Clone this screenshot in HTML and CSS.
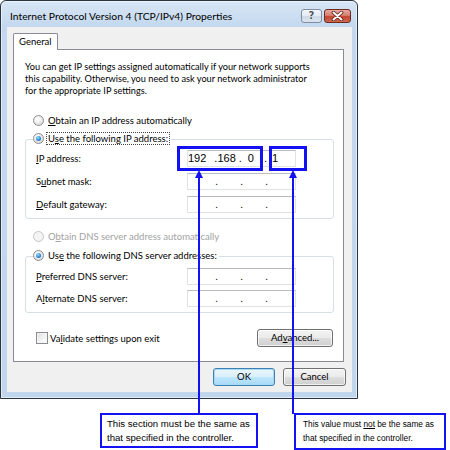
FILE: index.html
```html
<!DOCTYPE html>
<html>
<head>
<meta charset="utf-8">
<title>Internet Protocol Version 4 (TCP/IPv4) Properties</title>
<link rel="stylesheet" href="styles.css">
</head>
<body>
<div class="page">
  <div class="window">
    <div class="titlebar">
      <span class="title">Internet Protocol Version 4 (TCP/IPv4) Properties</span>
      <div class="caption-btns">
        <span class="cbtn help">?</span>
        <span class="cbtn close">
          <svg width="13" height="10" viewBox="0 0 13 10"><path d="M2.5 1.5 L10.5 8.5 M10.5 1.5 L2.5 8.5" stroke="#5a1f18" stroke-width="3.6" stroke-linecap="round"/><path d="M2.5 1.5 L10.5 8.5 M10.5 1.5 L2.5 8.5" stroke="#ffffff" stroke-width="2" stroke-linecap="round"/></svg>
        </span>
      </div>
    </div>
    <div class="client">
      <div class="tabs"><span class="tab">General</span></div>
      <div class="panel">
        <p class="intro">You can get IP settings assigned automatically if your network supports<br>this capability. Otherwise, you need to ask your network administrator<br>for the appropriate IP settings.</p>
        <div class="opt first"><span class="radio"></span><span><u>O</u>btain an IP address automatically</span></div>
        <div class="group g-ip">
          <div class="legend"><span class="radio on"></span><span class="focus">U<u>s</u>e the following IP address:</span></div>
          <div class="row first"><span class="lbl"><u>I</u>P address:</span>
            <div class="ipfield filled"><span class="n">192</span><span class="p p1">.</span><span class="n">168</span><span class="p p2">.</span><span class="n n3">0</span><span class="p p3">.</span><span class="n n4">1</span></div>
          </div>
          <div class="row"><span class="lbl">S<u>u</u>bnet mask:</span>
            <div class="ipfield"><span class="seg"></span><span class="sep">.</span><span class="seg"></span><span class="sep">.</span><span class="seg"></span><span class="sep">.</span><span class="seg"></span></div>
          </div>
          <div class="row"><span class="lbl"><u>D</u>efault gateway:</span>
            <div class="ipfield"><span class="seg"></span><span class="sep">.</span><span class="seg"></span><span class="sep">.</span><span class="seg"></span><span class="sep">.</span><span class="seg"></span></div>
          </div>
        </div>
        <div class="opt dns-auto disabled"><span class="radio"></span><span>O<u>b</u>tain DNS server address automatically</span></div>
        <div class="group g-dns">
          <div class="legend"><span class="radio on"></span><span class="plain">Us<u>e</u> the following DNS server addresses:</span></div>
          <div class="row first"><span class="lbl"><u>P</u>referred DNS server:</span>
            <div class="ipfield"><span class="seg"></span><span class="sep">.</span><span class="seg"></span><span class="sep">.</span><span class="seg"></span><span class="sep">.</span><span class="seg"></span></div>
          </div>
          <div class="row"><span class="lbl">A<u>l</u>ternate DNS server:</span>
            <div class="ipfield"><span class="seg"></span><span class="sep">.</span><span class="seg"></span><span class="sep">.</span><span class="seg"></span><span class="sep">.</span><span class="seg"></span></div>
          </div>
        </div>
        <div class="bottom-row">
          <div class="check-row"><span class="checkbox"></span><span>Va<u>l</u>idate settings upon exit</span></div>
          <button class="btn advanced">Ad<u>v</u>anced...</button>
        </div>
      </div>
      <div class="actions">
        <button class="btn ok">OK</button>
        <button class="btn cancel">Cancel</button>
      </div>
    </div>
  </div>

  <svg class="annot" width="450" height="450" viewBox="0 0 450 450">
    <rect x="178.5" y="147.5" width="83" height="22" fill="none" stroke="#1212f2" stroke-width="3"/>
    <rect x="270.5" y="147.5" width="35" height="22" fill="none" stroke="#1212f2" stroke-width="3"/>
    <line x1="199" y1="176" x2="199" y2="414" stroke="#1212f2" stroke-width="2"/>
    <line x1="293" y1="176" x2="293" y2="414" stroke="#1212f2" stroke-width="2"/>
    <path d="M199 170 L195 178 L203 178 Z" fill="#1212f2"/>
    <path d="M293 170 L289 178 L297 178 Z" fill="#1212f2"/>
  </svg>
  <div class="callout c1">This section must be the same as<br>that specified in the controller.</div>
  <div class="callout c2">This value must <u>not</u> be the same as<br>that specified in the controller.</div>
</div>
</body>
</html>
```

FILE: styles.css
```css
* { box-sizing: border-box; }
html, body { margin: 0; padding: 0; background: #ffffff; }
body {
  font-family: Lato, "Segoe UI", "Liberation Sans", sans-serif;
  font-size: 9.5px;
  color: #000;
}
.page { position: relative; width: 450px; height: 450px; overflow: hidden; }

/* window frame */
.window {
  width: 358px;
  height: 399px;
  border: 1px solid #2a3440;
  border-radius: 6px 6px 0 0;
  background: linear-gradient(to bottom, #d8e6f5 0px, #c3d8ee 26px, #c0d6ed 100%);
  box-shadow: inset 0 0 0 1px rgba(255,255,255,0.55);
  display: flex;
  flex-direction: column;
}
.titlebar {
  height: 26px;
  display: flex;
  justify-content: space-between;
  align-items: flex-start;
  padding-left: 9px;
}
.title {
  margin-top: 9px;
  line-height: 13px;
  font-size: 10.3px;
  color: #000;
  white-space: nowrap;
}
.caption-btns {
  display: flex;
  gap: 2px;
  margin-top: 8px;
  margin-right: 6px;
}
.cbtn {
  height: 14px;
  border-radius: 3px;
  display: flex;
  align-items: center;
  justify-content: center;
}
.help {
  width: 21px;
  border: 1px solid #7d8ea4;
  background: linear-gradient(to bottom, #f4f7fb 0%, #e3eaf3 50%, #cfdae7 51%, #dbe4ee 100%);
  color: #4d5563;
  font-family: "DejaVu Sans", sans-serif;
  font-size: 10px;
  font-weight: bold;
  line-height: 12px;
  text-shadow: 0 0 1px #fff, 0 0 1px #fff;
}
.close {
  width: 27px;
  border: 1px solid #6b2a22;
  background: linear-gradient(to bottom, #e8a99d 0%, #d8806f 45%, #c2452f 55%, #cf6a4f 100%);
}

/* client area */
.client {
  flex: 1;
  margin: 0 5px 6px 6px;
  background: #f0f0f0;
  padding: 6px 6px 6px 6px;
  display: flex;
  flex-direction: column;
}
.tabs { display: flex; height: 16px; position: relative; z-index: 1; }
.tab {
  width: 45px;
  height: 17px;
  background: #ffffff;
  border: 1px solid #898c95;
  border-bottom: none;
  border-radius: 2px 2px 0 0;
  padding-left: 5px;
  line-height: 15px;
}
.panel {
  height: 313px;
  margin-right: 2px;
  background: #ffffff;
  border: 1px solid #898c95;
  padding: 0 9px 0 11px;
  display: flex;
  flex-direction: column;
}
.intro { margin: 11px 0 0 0; line-height: 12px; font-size: 9.2px; white-space: nowrap; }

.opt { display: flex; align-items: center; height: 14px; gap: 4px; margin-left: 8px; }
.opt.first { margin-top: 16px; }
.opt.dns-auto { margin-top: 10px; }
.disabled { color: #a2a2a2; }

.radio {
  width: 11px;
  height: 11px;
  border-radius: 50%;
  border: 1px solid #8a8d91;
  background: radial-gradient(circle at 40% 35%, #ffffff 0%, #f0f0f0 40%, #cfcfcf 100%);
  display: flex;
  align-items: center;
  justify-content: center;
  flex: none;
}
.radio.on::after {
  content: "";
  width: 5px;
  height: 5px;
  border-radius: 50%;
  background: radial-gradient(circle at 40% 35%, #9be0ff 0%, #2a8ad8 55%, #0d4f9c 100%);
}
.disabled .radio { border-color: #c4c6c8; background: #f4f4f4; }

.group {
  border: 1px solid #d5dfe5;
  border-radius: 3px;
  padding: 0 0 5px 10px;
  display: flex;
  flex-direction: column;
}
.g-ip { margin-top: 12px; }
.g-dns { margin-top: 13px; }
.legend {
  display: flex;
  align-items: center;
  gap: 3px;
  height: 14px;
  margin: -9px 0 0 -3px;
  padding: 0 2px 0 0;
  background: #ffffff;
  align-self: flex-start;
}
.focus { outline: 1px dotted #444; outline-offset: 0px; padding: 0 1px; line-height: 11px; }
.plain { padding-left: 1px; }

.row { display: flex; align-items: center; height: 17px; margin-top: 6px; }
.g-ip .row.first { margin-top: 5px; }
.g-dns .row { margin-top: 5px; }
.g-dns .row.first { margin-top: 6px; }
.lbl { width: 151px; }

.ipfield {
  width: 109px;
  height: 17px;
  border: 1px solid #e0e3e6;
  border-top-color: #b9bcc0;
  background: #ffffff;
  display: flex;
  align-items: center;
  padding-left: 5px;
  font-size: 9.5px;
  line-height: 15px;
}
.ipfield .seg { width: 22px; }
.ipfield .sep { width: 3px; text-align: center; }
.ipfield.filled {
  padding-left: 0;
  font-family: "Liberation Sans", Arial, sans-serif;
  font-size: 11px;
}
.filled .p1 { margin-left: 8px; }
.filled .p2 { margin-left: 3px; }
.filled .n3 { margin-left: 6px; }
.filled .p3 { margin-left: 10px; }
.filled .n4 { margin-left: 5px; }

.bottom-row {
  margin-top: 16px;
  height: 18px;
  display: flex;
  align-items: center;
  justify-content: space-between;
}
.check-row { display: flex; align-items: center; gap: 2px; margin-left: 11px; }
.checkbox {
  width: 12px;
  height: 12px;
  border: 1px solid #8a8d91;
  background: linear-gradient(135deg, #dcdcdc 0%, #f6f6f6 60%, #ffffff 100%);
  box-shadow: inset 0 0 0 1px #f4f4f4;
}

.btn {
  height: 18px;
  border: 1px solid #707070;
  border-radius: 3px;
  background: linear-gradient(to bottom, #f3f3f3 0%, #ebebeb 48%, #dddddd 52%, #cfcfcf 100%);
  box-shadow: inset 0 0 0 1px rgba(255,255,255,0.7);
  font-family: inherit;
  font-size: 9.5px;
  color: #000;
  padding: 0;
  line-height: 14px;
}
.advanced { width: 76px; margin-right: 1px; }
.actions {
  margin-top: 6px;
  display: flex;
  justify-content: flex-end;
  gap: 8px;
}
.ok {
  width: 62px;
  border-color: #3c7fb1;
  box-shadow: inset 0 0 0 1px #a7d9f5;
  background: linear-gradient(to bottom, #eaf6fd 0%, #d9f0fc 48%, #bee6fd 52%, #a7d9f5 100%);
}
.cancel { width: 63px; }

/* annotations */
.annot { position: absolute; left: 0; top: 0; pointer-events: none; }
.callout {
  position: absolute;
  background: #ffffff;
  border: 2px solid #1212f2;
  font-family: "Liberation Sans", Arial, sans-serif;
  font-size: 9.6px;
  line-height: 14px;
  color: #000;
  white-space: nowrap;
}
.c1 { left: 100px; top: 413px; width: 158px; height: 35px; padding: 2px 0 0 5px; }
.c2 { left: 294px; top: 413px; width: 152px; height: 37px; padding: 2px 0 0 7px; font-size: 8.3px; }
```
